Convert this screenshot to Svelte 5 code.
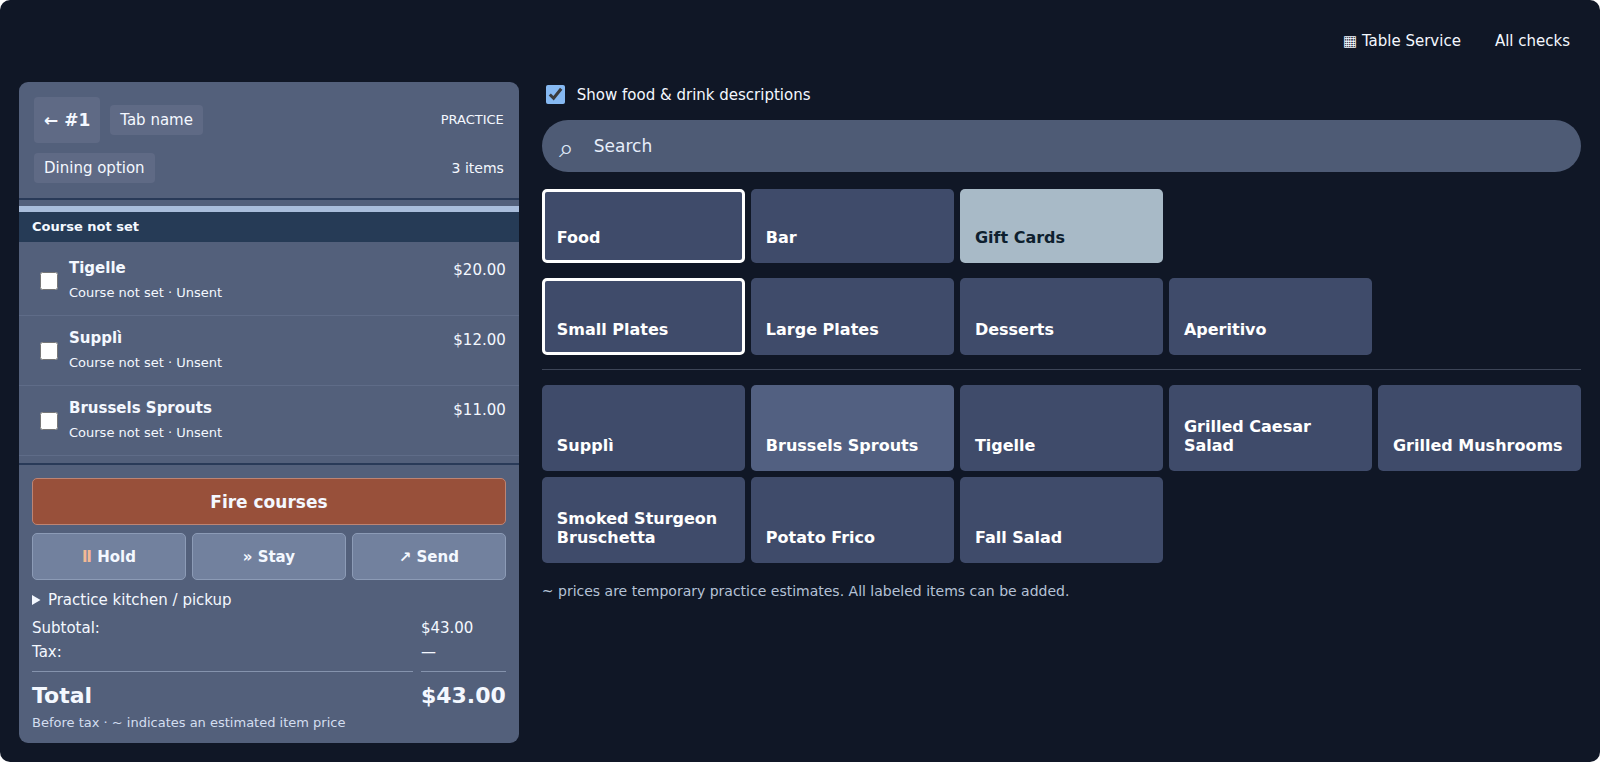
<script>
    let showDescriptions = $state(true);
    let query = $state('');
    let group = $state('Food');
    let menu = $state('Small Plates');

    const items = [
        { name: 'Tigelle', price: 20 },
        { name: 'Supplì', price: 12 },
        { name: 'Brussels Sprouts', price: 11 }
    ];

    const groups = ['Food', 'Bar', 'Gift Cards'];
    const menus = ['Small Plates', 'Large Plates', 'Desserts', 'Aperitivo'];
    const dishes = [
        'Supplì',
        'Brussels Sprouts',
        'Tigelle',
        'Grilled Caesar Salad',
        'Grilled Mushrooms',
        'Smoked Sturgeon Bruschetta',
        'Potato Frico',
        'Fall Salad'
    ];

    let subtotal = $derived(items.reduce((sum, item) => sum + item.price, 0));
    let visible = $derived(dishes.filter((d) => d.toLowerCase().includes(query.toLowerCase())));

    const money = (n) => '$' + n.toFixed(2);
</script>

<div class="app">
    <nav class="topbar">
        <a href="#tables">▦ Table Service</a>
        <a href="#checks">All checks</a>
    </nav>

    <div class="workspace">
        <section class="check">
            <header class="check-head">
                <div class="head-row">
                    <button class="back">← #1</button>
                    <button class="chip">Tab name</button>
                    <span class="mode">PRACTICE</span>
                </div>
                <div class="head-row">
                    <button class="chip">Dining option</button>
                    <span class="count">{items.length} items</span>
                </div>
            </header>

            <div class="lines">
                <h2 class="course">Course not set</h2>
                {#each items as item}
                    <label class="line">
                        <input type="checkbox" />
                        <span class="line-text">
                            <strong>{item.name}</strong>
                            <small>Course not set · Unsent</small>
                        </span>
                        <span class="price">{money(item.price)}</span>
                    </label>
                {/each}
            </div>

            <footer class="check-foot">
                <button class="fire">Fire courses</button>
                <div class="actions">
                    <button><span class="pause">Ⅱ</span> Hold</button>
                    <button>» Stay</button>
                    <button>↗ Send</button>
                </div>
                <details>
                    <summary>Practice kitchen / pickup</summary>
                </details>
                <dl class="totals">
                    <dt>Subtotal:</dt>
                    <dd>{money(subtotal)}</dd>
                    <dt>Tax:</dt>
                    <dd>—</dd>
                    <dt class="total">Total</dt>
                    <dd class="total">{money(subtotal)}</dd>
                </dl>
                <p class="estimate">Before tax · ~ indicates an estimated item price</p>
            </footer>
        </section>

        <main class="menu">
            <label class="toggle">
                <input type="checkbox" bind:checked={showDescriptions} />
                Show food &amp; drink descriptions
            </label>

            <div class="search">
                <span class="search-icon" aria-hidden="true">⌕</span>
                <input type="text" placeholder="Search" aria-label="Search" bind:value={query} />
            </div>

            <div class="grid groups">
                {#each groups as name}
                    <button
                        class="tile"
                        class:selected={group === name}
                        class:gift={name === 'Gift Cards'}
                        onclick={() => (group = name)}>{name}</button>
                {/each}
            </div>

            <div class="grid menus">
                {#each menus as name}
                    <button class="tile" class:selected={menu === name} onclick={() => (menu = name)}>{name}</button>
                {/each}
            </div>

            <div class="grid dishes">
                {#each visible as name}
                    <button class="tile" class:light={name === 'Brussels Sprouts'}>{name}</button>
                {/each}
            </div>

            <p class="note">~ prices are temporary practice estimates. All labeled items can be added.</p>
        </main>
    </div>
</div>

<style>
    :global(body) {
        background: #fff;
    }

    .app {
        box-sizing: border-box;
        min-height: 100vh;
        display: flex;
        flex-direction: column;
        padding: 0 19px 19px;
        border-radius: 10px;
        background: #101726;
        color: #f4f8ff;
        font: 15px/18px 'DejaVu Sans', sans-serif;
    }

    button,
    input {
        font: inherit;
        color: inherit;
    }

    button {
        border: 0;
        cursor: pointer;
    }

    .topbar {
        display: flex;
        justify-content: flex-end;
        align-items: center;
        gap: 12px;
        height: 82px;
    }

    .topbar a {
        padding: 11px;
        color: inherit;
        text-decoration: none;
    }

    .workspace {
        flex: 1;
        display: grid;
        grid-template-columns: 32% minmax(0, 1fr);
        gap: 23px;
    }

    /* Current check */
    .check {
        display: flex;
        flex-direction: column;
        border-radius: 9px;
        background: #53607b;
    }

    .check-head {
        display: flex;
        flex-direction: column;
        gap: 10px;
        padding: 15px;
        border-bottom: 2px solid #293a58;
    }

    .head-row {
        display: flex;
        align-items: center;
        gap: 10px;
    }

    .back {
        height: 46px;
        padding: 0 10px;
        border-radius: 4px;
        background: #5f6a85;
        font-size: 17px;
        font-weight: bold;
    }

    .chip {
        height: 30px;
        padding: 0 10px;
        border-radius: 4px;
        background: #5f6a85;
    }

    .mode,
    .count {
        margin-left: auto;
        font-size: 13px;
    }

    .count {
        font-size: 14px;
    }

    .lines {
        flex: 1;
        padding: 6px 0;
    }

    .course {
        margin: 0 0 4px;
        padding: 6px 13px;
        border-top: 6px solid #a9bddb;
        background: #263b56;
        font-size: 13px;
        line-height: 18px;
    }

    .line {
        display: flex;
        align-items: center;
        gap: 11px;
        padding: 13px 13px 13px 21px;
        border-bottom: 1px solid #5f6c88;
    }

    .line input {
        width: 18px;
        height: 18px;
        margin: 0;
    }

    .line-text {
        flex: 1;
        display: flex;
        flex-direction: column;
        gap: 7px;
    }

    .line-text small {
        font-size: 13px;
    }

    .price {
        align-self: flex-start;
        padding-top: 2px;
    }

    .check-foot {
        padding: 13px 13px 11px;
        border-top: 2px solid #293a58;
    }

    .fire,
    .actions button {
        height: 47px;
        border: 1px solid #8c9bb6;
        border-radius: 5px;
        background: #72819e;
        font-weight: bold;
    }

    .fire {
        width: 100%;
        border-color: #bd8473;
        background: #98503a;
        font-size: 17px;
    }

    .actions {
        display: grid;
        grid-template-columns: repeat(3, 1fr);
        gap: 6px;
        margin: 8px 0 11px;
    }

    .pause {
        color: #f3b995;
    }

    .totals {
        display: grid;
        grid-template-columns: 1fr auto;
        gap: 6px 8px;
        margin: 10px 0 5px;
    }

    .totals dd {
        margin: 0;
    }

    .totals .total {
        margin-top: 4px;
        padding-top: 11px;
        border-top: 1px solid #8593ad;
        font-size: 22px;
        font-weight: bold;
        line-height: 26px;
    }

    .estimate {
        margin: 0;
        color: #d3def0;
        font-size: 13px;
    }

    /* Menu */
    .toggle {
        display: flex;
        align-items: center;
        gap: 12px;
        padding: 3px 4px;
    }

    .toggle input {
        width: 19px;
        height: 19px;
        margin: 0;
        accent-color: #86b9f2;
    }

    .search {
        display: flex;
        align-items: center;
        height: 52px;
        margin: 13px 0 17px;
        padding: 0 17px;
        border-radius: 26px;
        background: #4e5b75;
    }

    .search-icon {
        width: 35px;
        padding-top: 3px;
        color: #dfe9f8;
        font-size: 26px;
        line-height: 28px;
    }

    .search input {
        flex: 1;
        padding: 0;
        border: 0;
        outline: 0;
        background: none;
        font-size: 17px;
    }

    .search input::placeholder {
        color: #e6eefb;
    }

    .grid {
        display: grid;
        grid-template-columns: repeat(5, minmax(0, 1fr));
        gap: 6px;
    }

    .groups {
        grid-auto-rows: 74px;
    }

    .menus {
        grid-auto-rows: 77px;
        padding: 15px 0 14px;
        border-bottom: 1px solid #3d4557;
    }

    .dishes {
        grid-auto-rows: 86px;
        padding-top: 15px;
    }

    .tile {
        display: flex;
        align-items: flex-end;
        padding: 12px 12px 13px;
        border: 3px solid transparent;
        border-radius: 5px;
        background: #3f4b6a border-box;
        color: #fff;
        font-size: 16px;
        font-weight: bold;
        line-height: 19px;
        text-align: left;
    }

    .tile.selected {
        border-color: #fff;
    }

    .tile.gift {
        background-color: #a8bac7;
        color: #0e1f2f;
    }

    .tile.light {
        background-color: #526081;
    }

    .note {
        margin: 19px 0 0;
        color: #b5c2d6;
        font-size: 14px;
    }
</style>
